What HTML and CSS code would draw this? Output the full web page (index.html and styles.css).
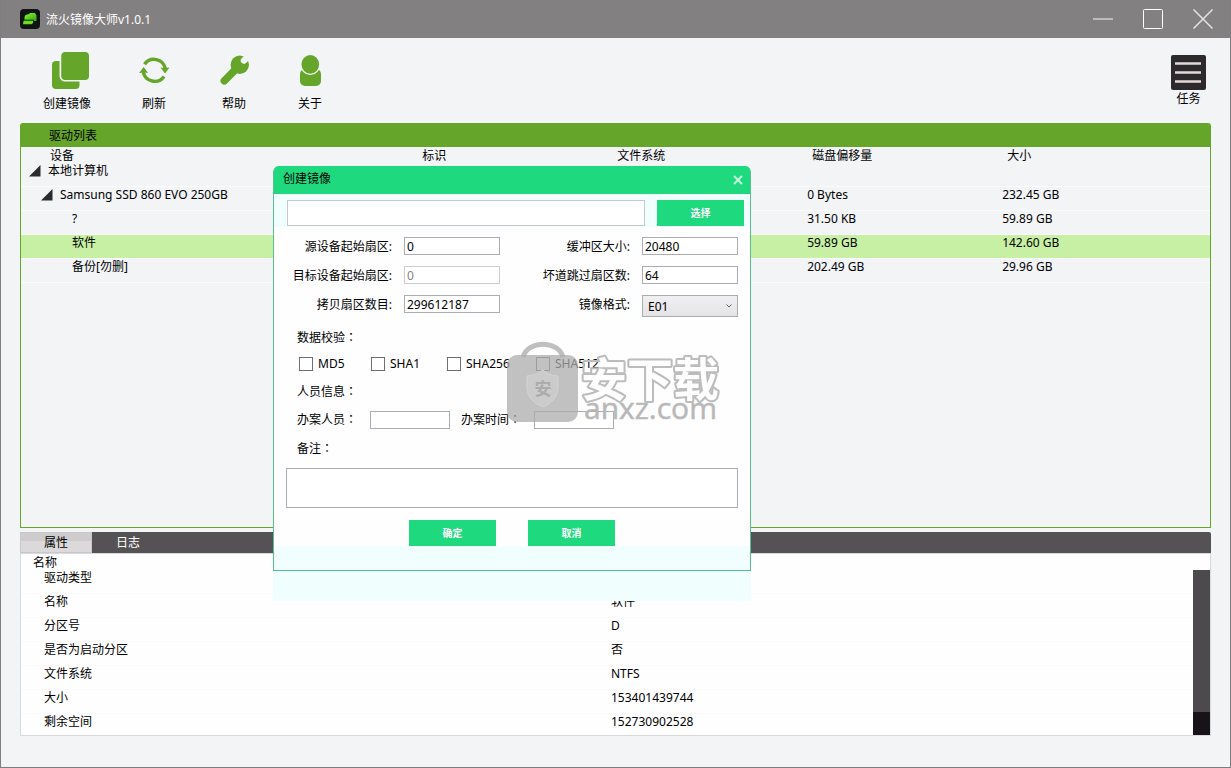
FILE: index.html
```html
<!DOCTYPE html>
<html lang="zh-CN">
<head>
<meta charset="utf-8">
<title>流火镜像大师v1.0.1</title>
<link rel="stylesheet" href="styles.css">
</head>
<body>
<div class="window">
  <header class="titlebar">
    <svg class="app-icon" viewBox="0 0 20 20" aria-hidden="true">
      <defs><linearGradient id="leaf" x1="0" y1="0" x2="1" y2="1"><stop offset="0" stop-color="#8bf02c"/><stop offset="1" stop-color="#35a812"/></linearGradient></defs>
      <rect width="20" height="20" rx="4" fill="#0e1411"/>
      <path d="M5.500 6L9 5L10 4H15L16.500 6.500V12H13.800V10.800H4.500V8Z" fill="url(#leaf)"/>
      <path d="M3.500 12H13V14L11.500 15.200H3Z" fill="#6fdc22"/>
      <path d="M4 11.400H13.300" stroke="#2a6a10" stroke-width="1"/>
    </svg>
    <h1 class="app-title">流火镜像大师v1.0.1</h1>
    <div class="window-controls">
      <button class="window-button" type="button" aria-label="最小化"><svg viewBox="0 0 20 20"><path d="M0 10H20" stroke="#bdbbbc" stroke-width="2"/></svg></button>
      <button class="window-button" type="button" aria-label="最大化"><svg viewBox="0 0 20 20"><rect x=".5" y=".5" width="19" height="19" rx="1" fill="none" stroke="#fff"/></svg></button>
      <button class="window-button" type="button" aria-label="关闭"><svg viewBox="0 0 20 20"><path d="M.5 .5L19.500 19.500M19.500 .5L.5 19.500" stroke="#e4e3e4" stroke-width="1.500"/></svg></button>
    </div>
  </header>

  <nav class="toolbar">
    <button class="tool tool-wide" type="button">
      <svg class="tool-icon" viewBox="0 0 48 40"><rect x="9" y="11" width="27.500" height="28" rx="4" fill="#64a52a"/><rect x="17.500" y="1.500" width="28.500" height="29" rx="4.500" fill="#64a52a" stroke="#f2f4f6" stroke-width="2"/><rect x="18.500" y="2" width="27.500" height="28" rx="4" fill="#64a52a"/></svg>
      <span>创建镜像</span>
    </button>
    <button class="tool" type="button">
      <svg class="tool-icon" viewBox="0 0 48 40"><g fill="none" stroke="#64a52a" stroke-width="3.400"><path d="M14.500 14.200A11.600 11.600 0 0 1 35.300 18.500"/><path d="M34.100 26.400A11.600 11.600 0 0 1 13.300 22.100"/></g><path d="M30.500 17.500L34 18L39.500 17.500L35 23.500ZM18.100 23.100L14.600 22.600L9.100 23.100L13.600 17.100Z" fill="#64a52a"/></svg>
      <span>刷新</span>
    </button>
    <button class="tool" type="button">
      <svg class="tool-icon" viewBox="0 0 48 40"><path d="M14.300 30.800L27 18" stroke="#64a52a" stroke-width="7.500" stroke-linecap="round"/><circle cx="29.800" cy="14.800" r="9.200" fill="#64a52a"/><path d="M34 10.500L41 3.500" stroke="#f2f4f6" stroke-width="6.500" stroke-linecap="round"/></svg>
      <span>帮助</span>
    </button>
    <button class="tool tool-narrow" type="button">
      <svg class="tool-icon" viewBox="0 0 48 40"><rect x="14" y="19" width="21" height="17" rx="5" fill="#64a52a"/><ellipse cx="24.300" cy="14.400" rx="10" ry="10.600" fill="#f2f4f6"/><ellipse cx="24.300" cy="14.400" rx="8.800" ry="9.400" fill="#64a52a"/></svg>
      <span>关于</span>
    </button>
    <button class="tool tool-task" type="button">
      <svg class="task-icon" viewBox="0 0 35 35"><rect width="35" height="35" rx="2" fill="#2d2a2e"/><path d="M4 8.500H30M4 17.500H30M4 26.500H30" stroke="#e4d9d8" stroke-width="2.400"/></svg>
      <span>任务</span>
    </button>
  </nav>

  <main class="content">
    <section class="drives">
      <h2 class="drives-title">驱动列表</h2>
      <table class="drive-table">
        <thead>
          <tr><th class="col-device">设备</th><th>标识</th><th>文件系统</th><th>磁盘偏移量</th><th>大小</th></tr>
        </thead>
        <tbody>
          <tr><td class="level-1"><svg class="arrow" viewBox="0 0 12 12"><path d="M0 11.500L11.500 0V11.500Z" fill="#2b2b2d"/></svg>本地计算机</td><td></td><td></td><td></td><td></td></tr>
          <tr><td class="level-2"><svg class="arrow" viewBox="0 0 12 12"><path d="M0 11.500L11.500 0V11.500Z" fill="#2b2b2d"/></svg>Samsung SSD 860 EVO 250GB</td><td></td><td></td><td>0 Bytes</td><td>232.45 GB</td></tr>
          <tr><td class="level-3">?</td><td></td><td></td><td>31.50 KB</td><td>59.89 GB</td></tr>
          <tr class="selected"><td class="level-3">软件</td><td></td><td></td><td>59.89 GB</td><td>142.60 GB</td></tr>
          <tr><td class="level-3">备份[勿删]</td><td></td><td></td><td>202.49 GB</td><td>29.96 GB</td></tr>
        </tbody>
      </table>
    </section>

    <section class="details">
      <div class="tabs" role="tablist">
        <button class="tab tab-active" type="button" role="tab" aria-selected="true">属性</button>
        <button class="tab" type="button" role="tab" aria-selected="false">日志</button>
      </div>
      <div class="details-body">
        <div class="details-head">名称</div>
        <div class="details-scroll">
          <table class="property-table">
            <tbody>
              <tr><th>驱动类型</th><td></td></tr>
              <tr><th>名称</th><td>软件</td></tr>
              <tr><th>分区号</th><td>D</td></tr>
              <tr><th>是否为启动分区</th><td>否</td></tr>
              <tr><th>文件系统</th><td>NTFS</td></tr>
              <tr><th>大小</th><td>153401439744</td></tr>
              <tr><th>剩余空间</th><td>152730902528</td></tr>
            </tbody>
          </table>
          <div class="scrollbar"><div class="scrollbar-thumb"></div></div>
        </div>
      </div>
    </section>
  </main>

  <div class="dialog-layer">
    <form class="dialog" role="dialog" aria-labelledby="dialog-title">
      <div class="dialog-head">
        <h2 class="dialog-title" id="dialog-title">创建镜像</h2>
        <button class="dialog-close" type="button" aria-label="关闭"><svg viewBox="0 0 10 10"><path d="M1 1L9 9M9 1L1 9" stroke="#c4f6dc" stroke-width="2"/></svg></button>
      </div>
      <div class="path-row">
        <input class="path-input" type="text" aria-label="镜像路径">
        <button class="action" type="button">选择</button>
      </div>
      <div class="dialog-body">
        <div class="form-grid">
          <label for="src-sector">源设备起始扇区:</label><input class="field" id="src-sector" type="text" value="0">
          <label for="buffer">缓冲区大小:</label><input class="field" id="buffer" type="text" value="20480">
          <label for="dst-sector">目标设备起始扇区:</label><input class="field" id="dst-sector" type="text" value="0" disabled>
          <label for="skip">坏道跳过扇区数:</label><input class="field" id="skip" type="text" value="64">
          <label for="count">拷贝扇区数目:</label><input class="field" id="count" type="text" value="299612187">
          <label for="format">镜像格式:</label>
          <div class="select-box">
            <select class="select" id="format"><option>E01</option></select>
            <svg class="chevron" viewBox="0 0 6 4"><path d="M.5 .5L3 3L5.500 .5" fill="none" stroke="#606060"/></svg>
          </div>
        </div>
        <div class="group-label">数据校验<span class="colon" lang="zh-TW">：</span></div>
        <div class="checks">
          <label class="check"><input class="box" type="checkbox">MD5</label>
          <label class="check"><input class="box" type="checkbox">SHA1</label>
          <label class="check"><input class="box" type="checkbox">SHA256</label>
          <label class="check"><input class="box" type="checkbox">SHA512</label>
        </div>
        <div class="group-label">人员信息<span class="colon" lang="zh-TW">：</span></div>
        <div class="person-row">
          <label for="person">办案人员<span class="colon" lang="zh-TW">：</span></label><input class="field" id="person" type="text">
          <label class="time-label" for="time">办案时间<span class="colon" lang="zh-TW">：</span></label><input class="field" id="time" type="text">
        </div>
        <label class="group-label" for="note">备注<span class="colon" lang="zh-TW">：</span></label>
        <textarea class="note" id="note"></textarea>
        <div class="dialog-actions">
          <button class="action" type="submit">确定</button>
          <button class="action" type="button">取消</button>
        </div>
      </div>
    </form>
  </div>

  <svg class="watermark" viewBox="0 0 220 90" aria-hidden="true">
    <defs>
      <mask id="outline" maskUnits="userSpaceOnUse" x="0" y="0" width="220" height="90">
        <text class="mark-name" x="77" y="61">安下载</text>
      </mask>
    </defs>
    <path d="M19 22C24 5 54 5 59 22" fill="none" stroke="#b4b4b4" stroke-opacity=".85" stroke-width="5"/>
    <rect x="3" y="20" width="71" height="67" rx="10" fill="#acacac" fill-opacity=".75"/>
    <path d="M39 35Q45 41 54 41V54Q53 66 39 72Q24 66 23 54V41Q32 41 39 35Z" fill="#cbcbcb" stroke="#d4d4d4"/>
    <text class="mark-badge" x="39" y="60">安</text>
    <rect width="220" height="90" fill="#bcbcbc" mask="url(#outline)"/>
    <text class="mark-site" x="80" y="84">anxz.com</text>
  </svg>
</div>
</body>
</html>
```
FILE: styles.css
```css
* { box-sizing: border-box; }

body {
  margin: 0;
  font-family: "Noto Sans", "Noto Sans CJK SC", sans-serif;
  font-size: 12px;
  line-height: 16px;
  color: #000;
}

button, input, select, textarea {
  margin: 0;
  font: inherit;
  color: inherit;
}

button {
  padding: 0;
  border: 0;
  background: none;
}

h1, h2 {
  margin: 0;
  font-size: 12px;
  font-weight: 400;
}

svg { display: block; }

.window {
  position: relative;
  display: flex;
  flex-direction: column;
  min-height: 100vh;
  border: 1px solid #807d7f;
  border-top: 0;
  background: #f2f4f6;
}

/* Title bar */
.titlebar {
  display: flex;
  align-items: center;
  gap: 6px;
  height: 38px;
  padding: 0 17px 0 19px;
  background: #838081;
  color: #fff;
}
.app-icon { width: 20px; height: 20px; }
.app-title {
  flex: 1;
  padding-top: 2px;
}
.window-controls { display: flex; gap: 30px; }
.window-button { width: 20px; height: 20px; }

/* Toolbar */
.toolbar {
  display: flex;
  align-items: flex-start;
  gap: 32px;
  padding: 12px 24px 11px 35px;
}
.tool {
  display: flex;
  flex-direction: column;
  align-items: center;
  gap: 6px;
  width: 48px;
}
.tool-wide { width: 62px; }
.tool-narrow { width: 40px; }
.tool-icon { width: 48px; height: 40px; }
.tool-task {
  gap: 1px;
  width: 35px;
  margin-left: auto;
  padding-top: 5px;
}
.task-icon { width: 35px; height: 35px; }

.content {
  flex: 1;
  display: flex;
  flex-direction: column;
  gap: 4px;
  padding: 0 19px 31px;
}

/* Drive list */
.drives {
  flex: 1;
  border: 1px solid #64a52a;
  border-top: 0;
  border-radius: 3px 3px 0 0;
}
.drives-title {
  padding: 5px 28px 3px;
  border-radius: 2px 2px 0 0;
  background: #64a52a;
}
.drive-table, .property-table {
  width: 100%;
  table-layout: fixed;
  border-collapse: separate;
  border-spacing: 0;
}
.drive-table th, .property-table th {
  font-weight: 400;
  text-align: left;
}
.drive-table th {
  width: 16.4%;
  padding: 1px 0 0 10px;
  line-height: 15px;
}
.drive-table .col-device {
  width: 32.9%;
  padding-left: 29px;
}
.drive-table th:last-child { width: auto; }
.drive-table td {
  height: 24px;
  padding: 0 0 0 5px;
  border-bottom: 1px solid #fafbfc;
  vertical-align: top;
}
.drive-table .level-1 { padding-left: 8px; }
.drive-table .level-2 { padding-left: 20px; }
.drive-table .level-3 { padding-left: 51px; }
.selected { background: #c8f0a4; }
.arrow {
  display: inline-block;
  width: 12px;
  height: 12px;
  margin-right: 7px;
  vertical-align: -2px;
}

/* Properties */
.details {
  display: flex;
  flex-direction: column;
  height: 204px;
}
.tabs {
  display: flex;
  border-radius: 2px 2px 0 0;
  background: #555255;
}
.tab {
  width: 72px;
  height: 21px;
  color: #fff;
}
.tab-active {
  border: 1px solid #c9c7c9;
  background: linear-gradient(#cfcccd 40%, #dbd9da 40%);
  color: #000;
}
.details-body {
  flex: 1;
  display: flex;
  flex-direction: column;
  min-height: 0;
  border: 1px solid #d8d9dc;
  background: #fefefe;
}
.details-head {
  padding: 1px 0 0 12px;
  line-height: 15px;
}
.details-scroll {
  flex: 1;
  display: flex;
  min-height: 0;
  overflow: hidden;
}
.property-table { flex: 1; align-self: flex-start; }
.property-table th, .property-table td {
  height: 24px;
  padding: 0 0 0 4px;
  border-bottom: 1px solid #fafafb;
  vertical-align: top;
}
.property-table th { padding-left: 23px; }
.scrollbar {
  width: 17px;
  background: #171318;
}
.scrollbar-thumb {
  height: 86%;
  background: #4d4a4d;
}

/* Dialog */
.dialog-layer {
  position: absolute;
  top: 166px;
  left: 272px;
  width: 478px;
  padding-bottom: 30px;
  border-radius: 6px 6px 0 0;
  background: #f0fffe;
}
.dialog {
  padding-bottom: 24px;
  border: 1px solid #56c092;
  border-top: 0;
  border-radius: 6px 6px 0 0;
}
.dialog-head {
  display: flex;
  align-items: center;
  justify-content: space-between;
  height: 28px;
  padding: 0 7px 0 9px;
  border-radius: 5px 5px 0 0;
  background: #1fd97e;
}
.dialog-title { padding-bottom: 2px; }
.dialog-close { width: 10px; height: 10px; }
.path-row {
  display: flex;
  gap: 12px;
  padding: 6px 6px 1px 13px;
}
.path-input {
  flex: 1;
  min-width: 0;
  height: 26px;
  border: 1px solid #c4c8ca;
  background: #fff;
}
.action {
  width: 87px;
  height: 26px;
  background: #1fd97e;
  color: #fff;
  font-size: 10px;
  font-weight: 700;
}
.dialog-body {
  display: flex;
  flex-direction: column;
  padding: 10px 12px 0;
  background: #fefefe;
}
.form-grid {
  display: grid;
  grid-template-columns: 106px 96px 1fr 96px;
  align-items: start;
  gap: 11px 12px;
  padding-bottom: 1px;
  text-align: right;
}
.form-grid label { padding-top: 2px; }
.field {
  width: 100%;
  height: 18px;
  padding: 0 2px;
  border: 1px solid #abadb3;
  background: #fff;
}
.field:disabled {
  border-color: #cdcdd0;
  color: #838383;
}
.select-box { position: relative; }
.select {
  display: block;
  width: 100%;
  height: 22px;
  padding: 1px 5px 0;
  border: 1px solid #acacac;
  border-radius: 0;
  appearance: none;
  background: linear-gradient(#f0eff1, #e4e3e6);
}
.chevron {
  position: absolute;
  top: 9px;
  right: 6px;
  width: 6px;
  height: 4px;
}
.group-label { padding: 12px 0 0 11px; }
.colon { font-family: "Noto Sans CJK TC", sans-serif; line-height: 1; }
.checks {
  display: grid;
  grid-template-columns: 72px 76px 89px 1fr;
  padding: 10px 0 0 13px;
}
.check {
  display: flex;
  align-items: center;
  gap: 5px;
}
.box {
  width: 14px;
  height: 14px;
  border: 1px solid #707070;
  appearance: none;
  background: #fff;
}
.person-row {
  display: grid;
  grid-template-columns: 73px 80px 84px 80px;
  align-items: center;
  padding: 11px 0 0 11px;
}
.time-label { padding-left: 11px; }
.note {
  height: 40px;
  margin-top: 11px;
  border: 1px solid #abadb3;
  background: #fff;
  resize: none;
}
.dialog-actions {
  display: flex;
  justify-content: center;
  gap: 32px;
  padding-top: 12px;
}

/* Watermark */
.watermark {
  position: absolute;
  top: 335px;
  left: 503px;
  width: 220px;
  height: 90px;
  pointer-events: none;
}
.mark-badge {
  font-size: 17px;
  font-weight: 700;
  fill: #acacac;
  text-anchor: middle;
}
/* Mask text: the white stroke shows, the black fill is cut out */
.mark-name {
  font-size: 46px;
  font-weight: 700;
  fill: #000;
  stroke: #fff;
  stroke-width: 4px;
  stroke-linejoin: round;
  paint-order: stroke;
}
.mark-site {
  font-family: "Open Sans", "Noto Sans", sans-serif;
  font-size: 30px;
  fill: #b8b8b8;
  stroke: #b8b8b8;
  stroke-width: 0.5px;
}
```
